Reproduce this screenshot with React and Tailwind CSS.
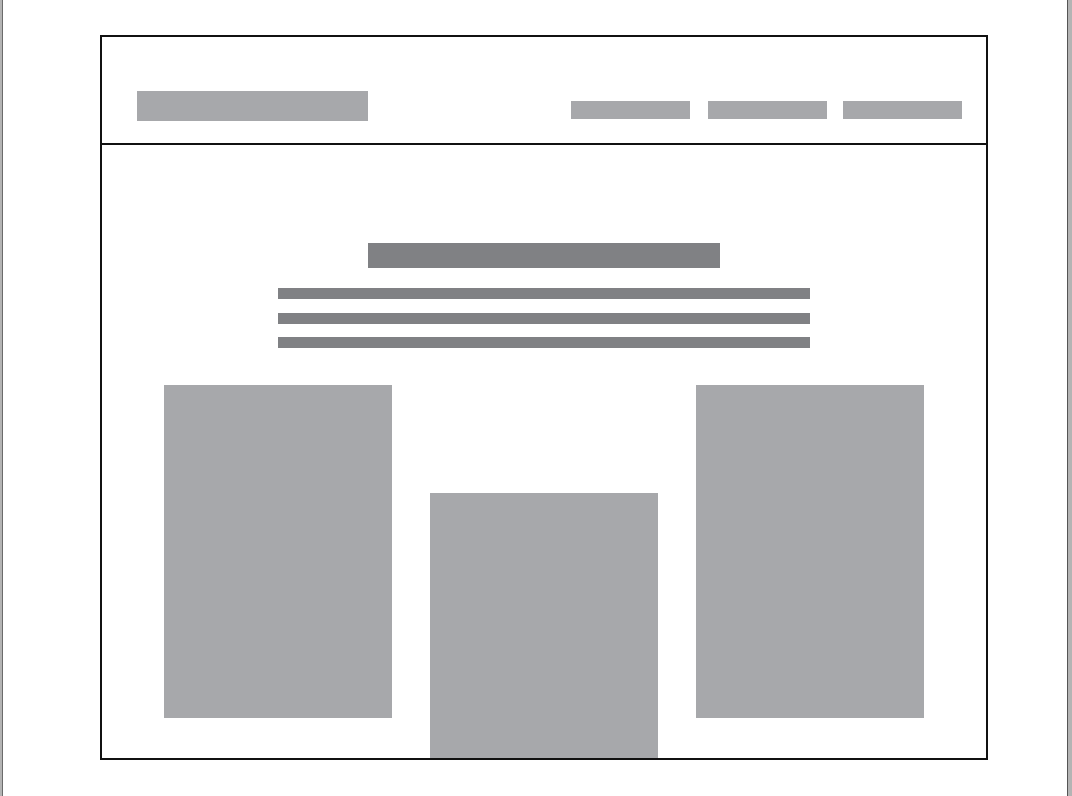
export default function App() {
  return (
    <div className="relative flex h-[796px] w-[1072px] bg-white">
      {/* page edges */}
      <div className="h-full w-[3px] border-r border-[#6b6b6b] bg-[#b4b4b4]" />

      <div className="flex-1 pl-[97px] pt-[35px]">
        {/* wireframe box */}
        <div className="flex h-[725px] w-[888px] flex-col border-2 border-[#111]">
          {/* header */}
          <header className="flex h-[108px] shrink-0 items-start justify-between border-b-2 border-[#111] pl-[35px] pr-[24px]">
            <div className="mt-[54px] h-[30px] w-[231px] bg-[#a7a8ab]" />
            <nav className="mt-[64px] flex">
              <div className="h-[18px] w-[119px] bg-[#a7a8ab]" />
              <div className="ml-[18px] h-[18px] w-[119px] bg-[#a7a8ab]" />
              <div className="ml-[16px] h-[18px] w-[119px] bg-[#a7a8ab]" />
            </nav>
          </header>

          {/* hero */}
          <main className="flex flex-1 flex-col items-center pt-[98px]">
            <div className="h-[25px] w-[352px] bg-[#808184]" />
            <div className="mt-[20px] flex flex-col">
              <div className="h-[11px] w-[532px] bg-[#808184]" />
              <div className="mt-[14px] h-[11px] w-[532px] bg-[#808184]" />
              <div className="mt-[13px] h-[11px] w-[532px] bg-[#808184]" />
            </div>

            {/* cards */}
            <div className="mt-[37px] flex flex-1 items-start gap-[38px]">
              <div className="h-[333px] w-[228px] bg-[#a7a8ab]" />
              <div className="mt-[108px] w-[228px] self-stretch bg-[#a7a8ab]" />
              <div className="h-[333px] w-[228px] bg-[#a7a8ab]" />
            </div>
          </main>
        </div>
      </div>

      <div className="h-full w-[5px] border-l border-[#555] bg-[#b4b4b4]" />
    </div>
  );
}
